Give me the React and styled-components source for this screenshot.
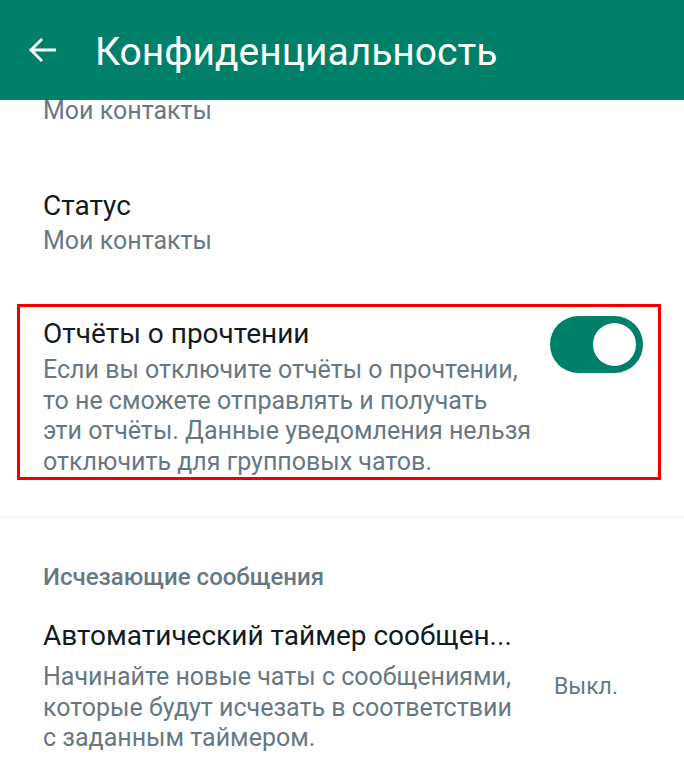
import React from "react";
import styled, { createGlobalStyle } from "styled-components";

const GlobalStyle = createGlobalStyle`
  html, body {
    margin: 0;
    padding: 0;
    background: #ffffff;
  }
  body {
    font-family: Roboto, "Noto Sans", "Liberation Sans", sans-serif;
    -webkit-font-smoothing: antialiased;
  }
`;

const Screen = styled.div`
  width: 684px;
  height: 767px;
  overflow: hidden;
  background: #ffffff;
  display: flex;
  flex-direction: column;
`;

const TopBar = styled.header`
  height: 100px;
  flex-shrink: 0;
  background: #008069;
  display: flex;
  align-items: center;
  padding: 0 0 0 28px;
  gap: 39px;
  color: #ffffff;
`;

const Title = styled.h1`
  margin: 0;
  font-weight: 400;
  font-size: 39px;
  line-height: 46px;
  padding-top: 4px;
`;

const List = styled.div`
  display: flex;
  flex-direction: column;
`;

const Row = styled.div`
  display: flex;
  align-items: flex-start;
  padding: ${(p) => p.$pad || "0 43px"};
  gap: 34px;
`;

const TextCol = styled.div`
  flex: 1;
  min-width: 0;
  display: flex;
  flex-direction: column;
`;

const Primary = styled.div`
  font-size: 28px;
  line-height: 36px;
  color: #111b21;
  white-space: nowrap;
`;

const Secondary = styled.div`
  font-size: 25px;
  line-height: 30.5px;
  color: #687882;
  white-space: nowrap;
  margin-top: ${(p) => p.$gap || 0}px;
`;

const HighlightBox = styled.div`
  margin: 48px 23px 0 17px;
  border: 3px solid #f20000;
  padding: 9px 15px 0 23px;
  display: flex;
  align-items: flex-start;
  gap: 20px;
`;

const Toggle = styled.div`
  width: 93px;
  height: 57px;
  border-radius: 29px;
  background: #008069;
  flex-shrink: 0;
  position: relative;
`;

const Knob = styled.span`
  position: absolute;
  right: 7px;
  top: 7px;
  width: 43px;
  height: 43px;
  border-radius: 50%;
  background: #ffffff;
`;

const Divider = styled.div`
  height: 1px;
  background: #eceff1;
  margin-top: 37px;
`;

const SectionLabel = styled.div`
  padding: 44px 43px 0;
  font-size: 24px;
  font-weight: 500;
  line-height: 30px;
  color: #687882;
`;

const ValueText = styled.div`
  font-size: 23px;
  line-height: 30px;
  color: #687882;
  padding-top: 54px;
  width: 90px;
  flex-shrink: 0;
`;

const BackArrow = () => (
  <svg width="28" height="24" viewBox="0 0 28 24" fill="none">
    <path
      d="M27 12H3M13 2L3 12l10 10"
      stroke="#ffffff"
      strokeWidth="2.8"
      strokeLinecap="square"
    />
  </svg>
);

export default function App() {
  return (
    <>
      <GlobalStyle />
      <Screen>
        <TopBar>
          <BackArrow />
          <Title>Конфиденциальность</Title>
        </TopBar>
        <List>
          <Row $pad="0 43px">
            <Secondary $gap={-4}>Мои контакты</Secondary>
          </Row>
          <Row $pad="61px 43px 0">
            <TextCol>
              <Primary>Статус</Primary>
              <Secondary $gap={2}>Мои контакты</Secondary>
            </TextCol>
          </Row>
          <HighlightBox>
            <TextCol>
              <Primary>Отчёты о прочтении</Primary>
              <Secondary $gap={3}>
                Если вы отключите отчёты о прочтении,
                <br />
                то не сможете отправлять и получать
                <br />
                эти отчёты. Данные уведомления нельзя
                <br />
                отключить для групповых чатов.
              </Secondary>
            </TextCol>
            <Toggle>
              <Knob />
            </Toggle>
          </HighlightBox>
          <Divider />
          <SectionLabel>Исчезающие сообщения</SectionLabel>
          <Row $pad="26px 40px 0 43px">
            <TextCol>
              <Primary>Автоматический таймер сообщен...</Primary>
              <Secondary $gap={8}>
                Начинайте новые чаты с сообщениями,
                <br />
                которые будут исчезать в соответствии
                <br />с заданным таймером.
              </Secondary>
            </TextCol>
            <ValueText>Выкл.</ValueText>
          </Row>
        </List>
      </Screen>
    </>
  );
}
